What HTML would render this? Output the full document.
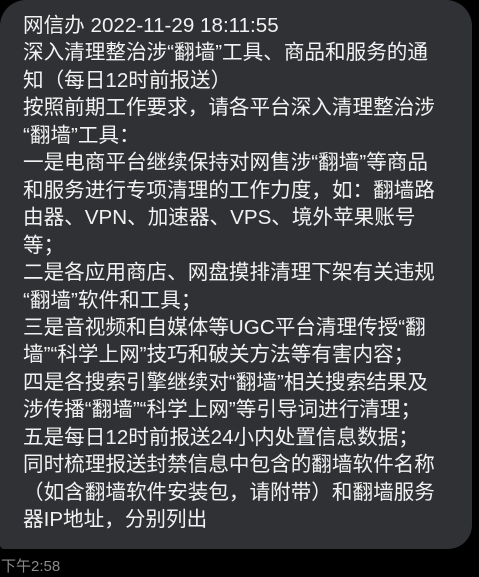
<!DOCTYPE html>
<html><head><meta charset="utf-8"><style>
html,body{margin:0;padding:0;background:#000;width:479px;height:577px;overflow:hidden}
.b{position:absolute;left:0;top:0;width:472px;height:549px;background:#2f3134;border-radius:26px 26px 24px 4px}
.t{position:absolute;left:23px;top:12px;width:450px;color:#f2f2f2;font-family:"Liberation Sans","Noto Sans CJK SC",sans-serif;font-size:20.6px;line-height:27.45px;white-space:nowrap}
.tm{position:absolute;left:1px;top:558px;color:#8a8a8a;font-family:"Liberation Sans","Noto Sans CJK SC",sans-serif;font-size:15px;line-height:18px}
</style></head><body>
<div class="b"></div>
<div class="t">网信办 2022-11-29 18:11:55<br>深入清理整治涉“翻墙”工具、商品和服务的通<br>知（每日12时前报送）<br>按照前期工作要求，请各平台深入清理整治涉<br>“翻墙”工具：<br>一是电商平台继续保持对网售涉“翻墙”等商品<br>和服务进行专项清理的工作力度，如：翻墙路<br>由器、VPN、加速器、VPS、境外苹果账号<br>等；<br>二是各应用商店、网盘摸排清理下架有关违规<br>“翻墙”软件和工具；<br>三是音视频和自媒体等UGC平台清理传授“翻<br>墙”“科学上网”技巧和破关方法等有害内容；<br>四是各搜索引擎继续对“翻墙”相关搜索结果及<br>涉传播“翻墙”“科学上网”等引导词进行清理；<br>五是每日12时前报送24小内处置信息数据；<br>同时梳理报送封禁信息中包含的翻墙软件名称<br>（如含翻墙软件安装包，请附带）和翻墙服务<br>器IP地址，分别列出</div>
<div class="tm">下午2:58</div>
</body></html>
